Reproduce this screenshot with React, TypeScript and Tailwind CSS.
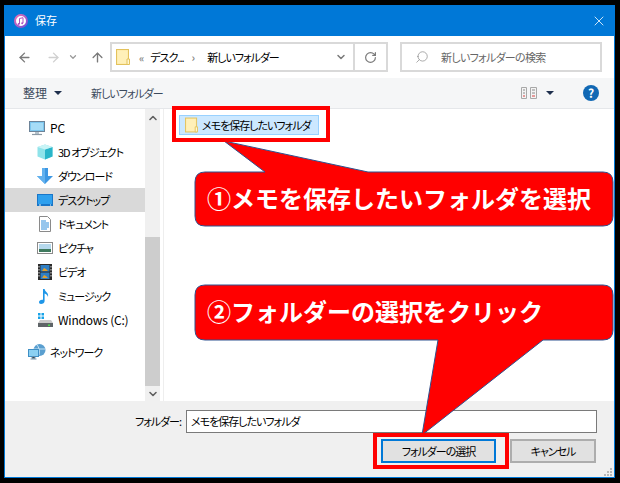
import React from "react";
import { ArrowLeft, ArrowRight, ArrowUp, ChevronDown, ChevronUp, RotateCw, Search, X } from "lucide-react";

const font = "font-['Noto_Sans_CJK_JP','Liberation_Sans',sans-serif] [font-feature-settings:'palt']";

const FolderIcon = ({ className }: { className?: string }) => (
  <svg viewBox="0 0 14 16" className={className}>
    <rect x="0.5" y="0.5" width="12" height="15" fill="#fde9a5" stroke="#e3c25c" />
    <rect x="1.5" y="1.5" width="10" height="13" fill="#fff0b8" />
    <path d="M11 10h2.5v5.5H11z" fill="#fff6d2" stroke="#e3c25c" />
  </svg>
);

const PcIcon = () => (
  <svg viewBox="0 0 16 16" className="h-4 w-4">
    <rect x="0.5" y="1.5" width="15" height="10" fill="#7cc6ee" stroke="#6d8398" />
    <rect x="2" y="3" width="12" height="7" fill="#a6dcf6" />
    <path d="M6 12h4v2H6z" fill="#b6c3cc" />
    <path d="M3 14.5h10" stroke="#8c9aa5" strokeWidth="1.2" />
  </svg>
);

const CubeIcon = () => (
  <svg viewBox="0 0 16 16" className="h-4 w-4">
    <path d="M8 0.5 15.5 3v9.5L8 15.5.5 12.5V3z" fill="#8fe3ea" />
    <path d="M8 5.5 15.5 3v9.5L8 15.5z" fill="#29b5c9" />
    <path d="M8 0.5 15.5 3 8 5.5.5 3z" fill="#c9f4f6" />
  </svg>
);

const DownloadIcon = () => (
  <svg viewBox="0 0 16 16" className="h-4 w-4">
    <path d="M5 0h6v8h5l-8 8-8-8h5z" fill="#3d97e3" />
    <path d="M5 0h3v16L0 8h5z" fill="#62b1ee" />
  </svg>
);

const DesktopIcon = () => (
  <svg viewBox="0 0 16 16" className="h-4 w-4">
    <rect x="0" y="2" width="16" height="12" fill="#1976c8" />
    <rect x="1" y="3" width="14" height="9" fill="#2ea0ee" />
    <path d="M2 13h2M13 13h1" stroke="#dff1fc" />
  </svg>
);

const DocIcon = () => (
  <svg viewBox="0 0 16 16" className="h-4 w-4">
    <path d="M2.5.5h8l3 3v12h-11z" fill="#fff" stroke="#8a8a8a" />
    <path d="M4 5h5M4 7h8M4 9h8M4 11h8M4 13h6" stroke="#2f8ddb" />
  </svg>
);

const PictureIcon = () => (
  <svg viewBox="0 0 16 16" className="h-4 w-4">
    <rect x="0.5" y="2.5" width="15" height="11" fill="#fff" stroke="#8a8a8a" />
    <rect x="2" y="4" width="12" height="5" fill="#b5d8ec" />
    <rect x="2" y="9" width="12" height="3" fill="#3f7a5e" />
  </svg>
);

const VideoIcon = () => (
  <svg viewBox="0 0 16 16" className="h-4 w-4">
    <rect x="1" y="0" width="14" height="16" fill="#2b2b2b" />
    <rect x="3.5" y="1" width="9" height="6.5" fill="#2f7fc4" />
    <rect x="3.5" y="8.5" width="9" height="6.5" fill="#2f7fc4" />
    <path d="M5 7l2-3 2 1 2 2zM5 14l2-3 2 1 2 2z" fill="#e0a030" />
    <path d="M2 2v12M14 2v12" stroke="#d8d8d8" strokeDasharray="1.5 1.5" />
  </svg>
);

const MusicIcon = () => (
  <svg viewBox="0 0 16 16" className="h-4 w-4">
    <path d="M6 1h1.6c.4 3 4.400 3.600 3.400 8-.4-1.800-1.800-3-3.400-3.400V13c0 1.800-1.700 3-3.600 3C2.600 16 2 15 2 14c0-1.500 2-2.700 4-2.200z" fill="#1e96e8" />
  </svg>
);

const DriveIcon = () => (
  <svg viewBox="0 0 16 16" className="h-4 w-4">
    <path d="M1 1h2.500v2.500H1zM4.500 1H7v2.500H4.500zM1 4.500h2.500V7H1zM4.500 4.500H7V7H4.500z" fill="#19a3e8" />
    <path d="M3 8h11l2 3v4H1v-4z" fill="#c9c9c9" />
    <rect x="1" y="11" width="15" height="4" fill="#5f6468" />
    <rect x="11" y="12.500" width="2" height="1.500" fill="#4ce04c" />
  </svg>
);

const NetworkIcon = () => (
  <svg viewBox="0 0 18 16" className="h-4 w-[18px]">
    <circle cx="11.500" cy="6" r="6" fill="#5a9fd0" />
    <path d="M9 1c2 2 3 6 2 10M6 5h11" stroke="#c4e3f5" fill="none" />
    <rect x="0.500" y="5.500" width="10" height="7" fill="#8bd0f2" stroke="#3f8fc5" />
    <path d="M4 13h3v1.500H4zM2.500 15h6" stroke="#7a95a8" />
  </svg>
);

const ViewIcon = () => (
  <svg viewBox="0 0 16 12" className="h-3 w-4">
    <path d="M.5.500h5v11h-5zM9.500.500h6v11h-6z" fill="#f4f4f4" stroke="#a8a8a8" />
    <path d="M2 3h2M11 3h3M2 6h2M11 6h3" stroke="#8a8a8a" />
    <path d="M2 9h2M11 9h3" stroke="#d84040" />
  </svg>
);

const MusicAppIcon = () => (
  <svg viewBox="0 0 14 14" className="h-3.5 w-3.5">
    <defs>
      <linearGradient id="ring" x1="0" y1="0" x2="1" y2="1">
        <stop offset="0" stopColor="#f06fb0" />
        <stop offset="1" stopColor="#6a4fd8" />
      </linearGradient>
    </defs>
    <circle cx="7" cy="7" r="6" fill="#fff" stroke="url(#ring)" strokeWidth="2" />
    <path d="M5.500 4.500 9 3.700V9M5.500 4.500V10" stroke="#b04fc0" strokeWidth="1" fill="none" />
    <circle cx="4.700" cy="10" r="1" fill="#b04fc0" />
    <circle cx="8.200" cy="9.300" r="1" fill="#b04fc0" />
  </svg>
);

const navItems = [
  { label: "3D オブジェクト", icon: <CubeIcon /> },
  { label: "ダウンロード", icon: <DownloadIcon /> },
  { label: "デスクトップ", icon: <DesktopIcon />, active: true },
  { label: "ドキュメント", icon: <DocIcon /> },
  { label: "ピクチャ", icon: <PictureIcon /> },
  { label: "ビデオ", icon: <VideoIcon /> },
  { label: "ミュージック", icon: <MusicIcon /> },
  { label: "Windows (C:)", icon: <DriveIcon />, latin: true },
];

export default function App() {
  return (
    <div className={`relative h-[483px] w-[620px] overflow-hidden bg-black pb-[5px] pl-1 pr-[5px] pt-[5px] text-[11px] tracking-[-1px] text-black ${font}`}>
      <div className="flex h-full flex-col border border-t-0 border-[#0078d7] bg-white">
        {/* barra de titulo */}
        <div className="flex h-[31px] shrink-0 items-center bg-[#0078d7] pl-[9px] pr-[7px] text-white">
          <MusicAppIcon />
          <span className="ml-[7px] text-[11px] tracking-normal">保存</span>
          <X className="ml-auto h-4 w-4" strokeWidth={1.2} />
        </div>

        {/* navegacion */}
        <div className="flex h-[42px] shrink-0 items-center">
          <ArrowLeft className="ml-[12px] h-[15px] w-[15px] text-[#7a7a7a]" strokeWidth={2.2} />
          <ArrowRight className="ml-[14px] h-[15px] w-[15px] text-[#d0d0d0]" strokeWidth={2.2} />
          <ChevronDown className="ml-[7px] h-[10px] w-[10px] text-[#9a9a9a]" strokeWidth={3} />
          <ArrowUp className="ml-[12px] h-[15px] w-[15px] text-[#7a7a7a]" strokeWidth={2.2} />
          <div className="ml-[5px] flex h-[30px] w-[278px] items-center border-2 border-[#d9d9d9] pl-[4px]">
            <FolderIcon className="h-[16px] w-[14px] shrink-0" />
            <span className="ml-[9px] text-[10px] font-bold text-[#888888]">«</span>
            <span className="ml-[7px]">デスク...</span>
            <span className="ml-[8px] text-[11px] font-bold text-[#888888]">›</span>
            <span className="ml-[13px]">新しいフォルダー</span>
            <ChevronDown className="ml-auto mr-[6px] h-3 w-3 text-[#7a7a7a]" strokeWidth={3} />
            <div className="flex h-full w-[33px] items-center justify-center border-l-2 border-[#d9d9d9]">
              <RotateCw className="h-[13px] w-[13px] text-[#7a7a7a]" strokeWidth={2.2} />
            </div>
          </div>
          <div className="ml-[12px] flex h-[30px] w-[202px] items-center border-2 border-[#d9d9d9] pl-[13px] text-[#666666]">
            <Search className="h-[14px] w-[14px] -scale-x-100 text-[#888888]" strokeWidth={1.2} />
            <span className="ml-[12px] tracking-[-0.7px]">新しいフォルダーの検索</span>
          </div>
        </div>

        {/* barra de herramientas */}
        <div className="flex h-[30px] shrink-0 items-center bg-[#f5f6f7] pl-[18px] text-[#3c4a5c]">
          <span className="text-[12px] tracking-normal">整理</span>
          <span className="ml-[7px] h-0 w-0 border-x-[4px] border-t-[4px] border-x-transparent border-t-[#1e2f4d]" />
          <span className="ml-[29px]">新しいフォルダー</span>
          <div className="ml-auto flex items-center">
            <ViewIcon />
            <span className="ml-[9px] h-0 w-0 border-x-[4px] border-t-[4px] border-x-transparent border-t-[#1e2f4d]" />
            <span className="ml-[29px] mr-[15px] flex h-4 w-4 items-center justify-center rounded-full bg-[#1168b4] text-[12px] font-bold tracking-normal text-white">?</span>
          </div>
        </div>

        {/* zona principal */}
        <div className="flex min-h-0 flex-1 border-t border-[#e5e7ea]">
          <div className="w-[140px] shrink-0 pt-[7px]">
            <div className="flex h-6 items-center pl-[24px]">
              <PcIcon />
              <span className="ml-[5px] text-[12px] tracking-normal">PC</span>
            </div>
            {navItems.map((item) => (
              <div key={item.label} className={`flex h-6 items-center pl-[32px] ${item.active ? "bg-[#d9d9d9]" : ""}`}>
                {item.icon}
                <span className={`ml-[5px] whitespace-nowrap ${item.latin ? "text-[12px] tracking-[-0.2px]" : ""}`}>{item.label}</span>
              </div>
            ))}
            <div className="mt-2 flex h-6 items-center pl-[23px]">
              <NetworkIcon />
              <span className="ml-[4px]">ネットワーク</span>
            </div>
          </div>

          <div className="flex w-[15px] shrink-0 flex-col bg-[#f0f0f0]">
            <div className="flex h-[17px] items-center justify-center">
              <ChevronUp className="h-3 w-3 text-[#606060]" strokeWidth={3.2} />
            </div>
            <div className="mt-[111px] h-[149px] bg-[#cdcdcd]" />
            <div className="flex flex-1 items-center justify-center">
              <ChevronDown className="h-3 w-3 text-[#606060]" strokeWidth={3.2} />
            </div>
          </div>

          <div className="ml-[3px] flex-1 border-l border-[#eeeeee] pl-[15px] pt-[6px]">
            <div className="flex h-5 w-[140px] items-center border border-[#99d1ff] bg-[#cce8ff] pl-[5px]">
              <FolderIcon className="h-[16px] w-[13px] shrink-0" />
              <span className="ml-[4px] whitespace-nowrap">メモを保存したいフォルダ</span>
            </div>
          </div>
        </div>

        {/* pie del dialogo */}
        <div className="h-[76px] shrink-0 bg-[#f0f0f0]">
          <div className="flex items-center pl-[130px] pt-[9px]">
            <span className="w-[51px] whitespace-nowrap">フォルダー:</span>
            <div className="flex h-[23px] w-[411px] items-center border border-[#7a7a7a] bg-white pl-[4px]">メモを保存したいフォルダ</div>
          </div>
          <div className="mt-[6px] flex justify-end pr-[18px]">
            <button className="h-6 w-[115px] border-2 border-[#0078d7] bg-[#e1e1e1]">フォルダーの選択</button>
            <button className="ml-[14px] h-6 w-[86px] border-2 border-[#adadad] bg-[#e1e1e1]">キャンセル</button>
          </div>
        </div>
      </div>

      {/* anotaciones encima del dialogo */}
      <svg viewBox="0 0 620 483" className="absolute left-0 top-0 h-[483px] w-[620px]">
        <path
          d="M205 172H265L224 141 368 172H603Q613 172 613 182V216Q613 226 603 226H205Q195 226 195 216V182Q195 172 205 172Z"
          fill="#ff0000"
          stroke="#2f528f"
        />
        <path
          d="M205 285H603Q613 285 613 295V330Q613 340 603 340H543L422 435 438 340H205Q195 340 195 330V295Q195 285 205 285Z"
          fill="#ff0000"
          stroke="#2f528f"
        />
      </svg>
      <div className="absolute left-[172px] top-[106px] h-[36px] w-[158px] border-4 border-[#ff0000]" />
      <div className="absolute left-[373px] top-[433px] h-[36px] w-[136px] border-4 border-[#ff0000]" />
      <div className="absolute left-[207px] top-[180px] whitespace-nowrap text-[24px] font-bold leading-[36px] tracking-normal text-white [font-feature-settings:normal]">①メモを保存したいフォルダを選択</div>
      <div className="absolute left-[207px] top-[293px] whitespace-nowrap text-[24px] font-bold leading-[36px] tracking-normal text-white [font-feature-settings:normal]">②フォルダーの選択をクリック</div>
      <div className="absolute bottom-[7px] right-[8px] grid grid-cols-3 gap-px">
        <span />
        <span />
        <span className="h-[2px] w-[2px] bg-[#b8b8b8]" />
        <span />
        <span className="h-[2px] w-[2px] bg-[#b8b8b8]" />
        <span className="h-[2px] w-[2px] bg-[#b8b8b8]" />
        <span className="h-[2px] w-[2px] bg-[#b8b8b8]" />
        <span className="h-[2px] w-[2px] bg-[#b8b8b8]" />
        <span className="h-[2px] w-[2px] bg-[#b8b8b8]" />
      </div>
    </div>
  );
}
